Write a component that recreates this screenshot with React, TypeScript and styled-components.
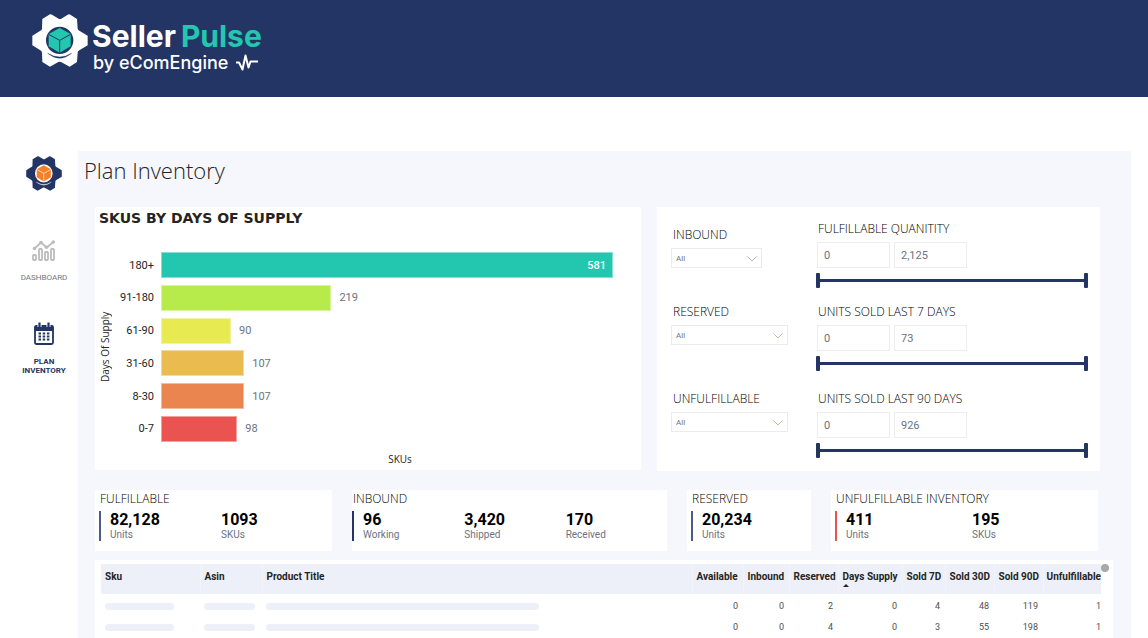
import React from "react";
import styled, { createGlobalStyle } from "styled-components";

const NAVY = "#233564";
const TEAL = "#23c6ae";
const DIN = `Roboto, "Liberation Sans", sans-serif`;
const HUMANIST = `"Open Sans", "Noto Sans", sans-serif`;
const LOGO = `Inter, "Liberation Sans", sans-serif`;

const GlobalStyle = createGlobalStyle`
  *, *::before, *::after { box-sizing: border-box; }
  body { margin: 0; background: #fff; color: #252423; font-family: ${DIN}; }
  h1, h2, h3, p, dl, dd, dt { margin: 0; font-weight: inherit; }
`;

/* ---------- page frame ---------- */

const Page = styled.div`
  display: flex;
  flex-direction: column;
  min-height: 100vh;
`;

const Header = styled.header`
  background: ${NAVY};
  height: 97px;
  padding: 14px 32px;
`;

const Brand = styled.a`
  display: inline-flex;
  gap: 4px;
  color: #fff;
  text-decoration: none;
  font-family: ${LOGO};
`;

const BrandText = styled.span`
  display: flex;
  flex-direction: column;
  padding-top: 8px;
`;

const BrandName = styled.span`
  display: flex;
  gap: 5px;
  font-size: 30px;
  line-height: 29px;
  font-weight: 700;
`;

const Accent = styled.span`
  color: ${TEAL};
`;

const Byline = styled.span`
  display: flex;
  align-items: center;
  gap: 7px;
  padding-left: 1px;
  font-size: 18px;
  line-height: 23px;
  font-weight: 500;
`;

const Body = styled.div`
  display: flex;
  flex: 1;
  padding: 54px 17px 0 0;
`;

const Sidebar = styled.nav`
  display: flex;
  flex-direction: column;
  align-items: center;
  width: 78px;
  padding: 5px 5px 0 15px;
  flex: none;
`;

const HomeLink = styled.a`
  display: block;
  height: 34px;
`;

const NavLink = styled.a<{ $active?: boolean }>`
  display: flex;
  flex-direction: column;
  align-items: center;
  gap: 12px;
  margin-top: ${(p) => (p.$active ? 40 : 50)}px;
  color: ${(p) => (p.$active ? NAVY : "#6f7783")};
  font-size: 8px;
  line-height: 9px;
  font-weight: ${(p) => (p.$active ? 700 : 400)};
  text-align: center;
  text-transform: uppercase;
  text-decoration: none;
`;

const Main = styled.main`
  display: flex;
  flex-direction: column;
  flex: 1;
  min-width: 0;
  background: #f6f7fc;
  padding: 0 18px 0 17px;
`;

const Title = styled.h1`
  height: 56px;
  margin-left: -11px;
  padding-top: 4px;
  font-family: ${HUMANIST};
  font-size: 22px;
  line-height: 30px;
  font-weight: 300;
`;

const Card = styled.section`
  background: #fff;
`;

const TopRow = styled.div`
  display: grid;
  grid-template-columns: 546fr 443fr;
  gap: 16px;
  padding-right: 13px;
`;

/* ---------- bar chart ---------- */

const ChartCard = styled(Card)`
  display: flex;
  flex-direction: column;
  height: 263px;
  padding: 3px 0 5px 4px;
`;

const ChartTitle = styled.h2`
  font-family: "DejaVu Sans", sans-serif;
  font-size: 14px;
  line-height: 16px;
  font-weight: 700;
`;

const Plot = styled.div`
  display: flex;
  flex: 1;
  padding: 26px 28px 11px 0;
`;

const AxisTitle = styled.span`
  font-family: ${HUMANIST};
  font-size: 10px;
  line-height: 12px;
  text-align: center;
`;

const YAxisTitle = styled(AxisTitle)`
  width: 12px;
  writing-mode: vertical-rl;
  transform: rotate(180deg);
`;

const XAxisTitle = styled(AxisTitle)`
  padding-left: 60px;
`;

const Bars = styled.div`
  display: flex;
  flex: 1;
  flex-direction: column;
  justify-content: space-between;
`;

const BarRow = styled.div`
  display: grid;
  grid-template-columns: 43px 1fr;
  column-gap: 7px;
  align-items: center;
  height: 26px;
  font-size: 11px;
  line-height: 14px;
`;

const Category = styled.span`
  padding-top: 1px;
  text-align: right;
`;

const BarTrack = styled.div`
  display: flex;
  align-items: center;
  gap: 8px;
  color: #6b7383;
`;

const Bar = styled.div<{ $color: string }>`
  display: flex;
  align-items: center;
  justify-content: flex-end;
  height: 26px;
  padding: 1px 6px 0 0;
  border: 1px solid rgba(255, 255, 255, 0.45);
  background: ${(p) => p.$color};
  color: #fff;
  font-weight: 500;
`;

const BarValue = styled.span`
  padding-top: 1px;
`;

/* ---------- filters ---------- */

const FilterCard = styled(Card)`
  display: grid;
  grid-template-columns: 146px 1fr;
  grid-template-rows: 83px 87px auto;
  height: 264px;
  padding: 14px 12px 0 14px;
`;

const Field = styled.div<{ $lowered?: boolean }>`
  display: flex;
  flex-direction: column;
  align-items: flex-start;
  padding-top: ${(p) => (p.$lowered ? 6 : 0)}px;
`;

const RangeGroup = styled.fieldset`
  min-width: 0;
  margin: 0;
  padding: 0;
  border: 0;
`;

const labelText = `
  font-family: ${HUMANIST};
  font-size: 12px;
  line-height: 16px;
  font-weight: 300;
  color: #000;
`;

const FieldLabel = styled.label`
  ${labelText}
  padding: 0 2px;
`;

const RangeLegend = styled.legend`
  ${labelText}
  padding: 0 1px;
`;

const SelectBox = styled.span<{ $wide?: boolean }>`
  display: grid;
  grid-template-columns: 1fr 14px;
  align-items: center;
  width: ${(p) => (p.$wide ? 117 : 91)}px;
  height: 20px;
  margin-top: 5px;
  border: 1px solid #ebebee;

  svg {
    grid-area: 1 / 2;
    margin-top: 2px;
    pointer-events: none;
  }
`;

const Select = styled.select`
  grid-area: 1 / 1 / 2 / 3;
  appearance: none;
  width: 100%;
  height: 18px;
  padding: 0 4px;
  border: 0;
  background: transparent;
  color: #6b7383;
  font-family: ${DIN};
  font-size: 8px;
`;

const Inputs = styled.div`
  display: flex;
  gap: 4px;
  margin-top: 5px;
`;

const NumberBox = styled.input`
  width: 73px;
  height: 26px;
  padding: 0 6px;
  border: 1px solid #ededf0;
  background: #fff;
  color: #6b7383;
  font-family: ${DIN};
  font-size: 11px;
`;

const Slider = styled.div`
  display: grid;
  align-items: center;
  height: 15px;
  margin: 5px 0 0 -1px;
  background: linear-gradient(${NAVY}, ${NAVY}) center / 100% 3px no-repeat;
`;

const Thumb = styled.input`
  grid-area: 1 / 1;
  appearance: none;
  width: 100%;
  height: 15px;
  margin: 0;
  background: transparent;
  pointer-events: none;

  &::-webkit-slider-thumb {
    appearance: none;
    width: 4px;
    height: 15px;
    border-radius: 1px;
    background: ${NAVY};
    pointer-events: auto;
  }
`;

/* ---------- key figures ---------- */

const KpiRow = styled.div`
  display: grid;
  grid-template-columns: 237fr 315fr 124fr 267fr;
  gap: 20px;
  margin: 19px 15px 0 0;
`;

const KpiCard = styled(Card)<{ $flush?: boolean }>`
  height: 61px;
  padding: 0 0 0 ${(p) => (p.$flush ? 0 : 4)}px;
`;

const KpiTitle = styled.h3`
  ${labelText}
  padding-left: 1px;
  line-height: 18px;
  white-space: nowrap;
`;

const KpiList = styled.dl<{ $color: string }>`
  display: grid;
  grid-auto-flow: column;
  grid-auto-columns: 1fr;
  height: 30px;
  margin-top: 3px;
  padding-left: 9px;
  border-left: 2px solid ${(p) => p.$color};
`;

const Kpi = styled.div`
  display: flex;
  flex-direction: column-reverse;
  justify-content: flex-end;
`;

const KpiValue = styled.dd`
  color: #000;
  font-size: 16px;
  line-height: 18px;
  font-weight: 700;
`;

const KpiLabel = styled.dt`
  color: #6b7383;
  font-size: 10px;
  line-height: 12px;
`;

/* ---------- table ---------- */

const TableCard = styled(Card)`
  display: flex;
  align-items: flex-start;
  flex: 1;
  margin-top: 9px;
  padding: 4px 4px 0 6px;
`;

const Table = styled.table`
  flex: 1;
  width: 100%;
  table-layout: fixed;
  border-collapse: collapse;
  font-size: 9px;
`;

const Th = styled.th<{ $width?: number; $num?: boolean }>`
  width: ${(p) => (p.$width ? `${p.$width}px` : "auto")};
  height: 30px;
  padding: 6px ${(p) => (p.$num ? 5 : 4)}px 0 4px;
  border-right: 1px solid #f2f4fa;
  background: #edf0f8;
  font-size: 10px;
  line-height: 14px;
  font-weight: 700;
  text-align: ${(p) => (p.$num ? "right" : "left")};
  vertical-align: top;
  white-space: nowrap;

  &:last-child {
    padding: 6px 0 0;
    border-right: 0;
  }
`;

const SortMark = styled.svg`
  display: block;
`;

const Td = styled.td<{ $num?: boolean }>`
  height: 21px;
  padding: 3px ${(p) => (p.$num ? 5 : 4)}px 0 4px;
  color: #4a4f57;
  line-height: 12px;
  text-align: ${(p) => (p.$num ? "right" : "left")};

  &:last-child {
    padding-right: 0;
  }
`;

const Redacted = styled.span<{ $width: number }>`
  display: block;
  width: ${(p) => p.$width}px;
  height: 7px;
  border-radius: 4px;
  background: #edf0f8;
`;

const ScrollDot = styled.span`
  width: 8px;
  height: 8px;
  flex: none;
  border-radius: 50%;
  background: #a9a9a9;
`;

/* ---------- drawings ---------- */

type GearProps = { width: number; height: number; gear: string; disc: string; cube: string };

function GearLogo({ width, height, gear, disc, cube }: GearProps) {
  return (
    <svg width={width} height={height} viewBox="36 40 168 159" preserveAspectRatio="none" aria-hidden="true">
      <path
        d="M67 55 90 41Q93 40 96 42L116 54Q120 56 124 54L143 42Q148 40 151 42L171 55 173 84Q174 88 178 90L203 105V134L178 149Q173 152 173 156L171 184 149 198 123 184Q119 182 115 184L90 198 67 184 66 156Q66 152 61 149L37 134V105L61 90Q66 88 66 84Z"
        fill={gear}
      />
      <circle cx="119" cy="119" r="41" fill={disc} />
      <path d="M119 82 152 100V137L119 156 86 137V100Z" fill={cube} />
      <path d="M86 101 119 119 152 101M119 119V156" fill="none" stroke={disc} strokeWidth="3" />
      <path d="M83 158Q119 180 155 158Q119 188 83 158Z" fill={disc} stroke={disc} strokeWidth="1" />
    </svg>
  );
}

function Pulse() {
  return (
    <svg width="24" height="18" viewBox="0 0 24 18" fill="none" stroke="#fff" strokeWidth="2" strokeLinejoin="round" aria-hidden="true">
      <path d="M1 8.500H4L7.500 15.500 10.500 1.500 13.500 13.500 15.500 7.500H23" />
    </svg>
  );
}

function DashboardIcon() {
  return (
    <svg width="24" height="21" viewBox="0 0 24 21" fill="none" stroke="#bdbdbd" strokeWidth="1.800" aria-hidden="true">
      <rect x="1" y="15" width="3" height="5" rx=".8" />
      <rect x="7" y="9" width="3" height="11" rx=".8" />
      <rect x="13" y="12" width="3" height="8" rx=".8" />
      <rect x="19" y="9" width="3" height="11" rx=".8" />
      <path d="M2.500 8.500 9 2.500 14.500 7.500 21.500 2" />
      <g fill="#bdbdbd" stroke="none">
        <circle cx="2.500" cy="8.500" r="1.800" />
        <circle cx="9" cy="2.500" r="1.800" />
        <circle cx="14.500" cy="7.200" r="1.800" />
        <circle cx="21.300" cy="2" r="1.800" />
      </g>
    </svg>
  );
}

function CalendarIcon() {
  return (
    <svg width="20" height="23" viewBox="0 0 20 23" aria-hidden="true">
      <rect x="1" y="4" width="18" height="18" rx="1.500" fill="#fff" stroke={NAVY} strokeWidth="1.800" />
      <path d="M.5 9V5Q.5 3.200 2 3.200H18Q19.500 3.200 19.500 5V9Z" fill={NAVY} />
      <path d="M5.500 1V5M14.500 1V5" stroke="#fff" strokeWidth="4" />
      <path d="M5.500.5V5M14.500.5V5" stroke={NAVY} strokeWidth="2.200" />
      <g fill={NAVY}>
        {[10.5, 13.5, 16.5].map((y) =>
          [4.5, 8.7, 12.9].map((x) => <rect key={`${x}-${y}`} x={x} y={y} width="2.500" height="2" />)
        )}
      </g>
    </svg>
  );
}

function Chevron({ color }: { color: string }) {
  return (
    <svg width="10" height="6" viewBox="0 0 10 6" fill="none" stroke={color} aria-hidden="true">
      <path d="M.5.5 5 5 9.500.5" />
    </svg>
  );
}

/* ---------- data ---------- */

const supply = [
  { range: "180+", skus: 581, color: "#23c6ae" },
  { range: "91-180", skus: 219, color: "#b7eb4c" },
  { range: "61-90", skus: 90, color: "#e7ea50" },
  { range: "31-60", skus: 107, color: "#eabb4e" },
  { range: "8-30", skus: 107, color: "#ea8550" },
  { range: "0-7", skus: 98, color: "#ea5450" },
];
const maxSkus = 581;

const filters = [
  { select: "Inbound", chevron: "#aeb4bf", range: "FULFILLABLE QUANITITY", high: "2,125" },
  { select: "Reserved", chevron: "#d9b59a", range: "UNITS SOLD LAST 7 DAYS", high: "73" },
  { select: "Unfulfillable", chevron: "#d9b59a", range: "UNITS SOLD LAST 90 DAYS", high: "926" },
];

const kpis = [
  { title: "FULFILLABLE", color: "#4c5b87", items: [["82,128", "Units"], ["1093", "SKUs"]] },
  { title: "INBOUND", color: NAVY, flush: true, items: [["96", "Working"], ["3,420", "Shipped"], ["170", "Received"]] },
  { title: "RESERVED", color: "#4c5b87", items: [["20,234", "Units"]] },
  { title: "UNFULFILLABLE INVENTORY", color: "#ea5450", items: [["411", "Units"], ["195", "SKUs"]] },
];

const columns = [
  { name: "Available", width: 51 },
  { name: "Inbound", width: 46 },
  { name: "Reserved", width: 49 },
  { name: "Days Supply", width: 64, sorted: true },
  { name: "Sold 7D", width: 43 },
  { name: "Sold 30D", width: 49 },
  { name: "Sold 90D", width: 49 },
  { name: "Unfulfillable", width: 58 },
];

const rows = [
  [0, 0, 2, 0, 4, 48, 119, 1],
  [0, 0, 4, 0, 3, 55, 198, 1],
];

/* ---------- sections ---------- */

function SupplyChart() {
  return (
    <ChartCard>
      <ChartTitle>SKUS BY DAYS OF SUPPLY</ChartTitle>
      <Plot>
        <YAxisTitle>Days Of Supply</YAxisTitle>
        <Bars>
          {supply.map((s) => {
            const full = s.skus === maxSkus;
            return (
              <BarRow key={s.range}>
                <Category>{s.range}</Category>
                <BarTrack>
                  <Bar $color={s.color} style={{ width: `${(s.skus / maxSkus) * 100}%` }}>
                    {full && s.skus}
                  </Bar>
                  {!full && <BarValue>{s.skus}</BarValue>}
                </BarTrack>
              </BarRow>
            );
          })}
        </Bars>
      </Plot>
      <XAxisTitle>SKUs</XAxisTitle>
    </ChartCard>
  );
}

function Filters() {
  return (
    <FilterCard>
      {filters.map((f, i) => (
        <React.Fragment key={f.select}>
          <Field $lowered={i === 0}>
            <FieldLabel htmlFor={f.select}>{f.select.toUpperCase()}</FieldLabel>
            <SelectBox $wide={i > 0}>
              <Select id={f.select}>
                <option>All</option>
              </Select>
              <Chevron color={f.chevron} />
            </SelectBox>
          </Field>
          <RangeGroup>
            <RangeLegend>{f.range}</RangeLegend>
            <Inputs>
              <NumberBox aria-label={`${f.range} from`} defaultValue="0" />
              <NumberBox aria-label={`${f.range} to`} defaultValue={f.high} />
            </Inputs>
            <Slider>
              <Thumb type="range" aria-label={`${f.range} lower bound`} defaultValue={0} />
              <Thumb type="range" aria-label={`${f.range} upper bound`} defaultValue={100} />
            </Slider>
          </RangeGroup>
        </React.Fragment>
      ))}
    </FilterCard>
  );
}

function InventoryTable() {
  return (
    <TableCard>
      <Table>
        <thead>
          <tr>
            <Th $width={99}>Sku</Th>
            <Th $width={62}>Asin</Th>
            <Th>Product Title</Th>
            {columns.map((c) => (
              <Th key={c.name} $width={c.width} $num aria-sort={c.sorted ? "ascending" : undefined}>
                {c.name}
                {c.sorted && (
                  <SortMark width="6" height="3" viewBox="0 0 6 3" aria-hidden="true">
                    <path d="M0 3 3 0 6 3Z" fill="#252423" />
                  </SortMark>
                )}
              </Th>
            ))}
          </tr>
        </thead>
        <tbody>
          {rows.map((row, i) => (
            <tr key={i}>
              <Td><Redacted $width={69} /></Td>
              <Td><Redacted $width={51} /></Td>
              <Td><Redacted $width={273} /></Td>
              {row.map((v, j) => (
                <Td key={j} $num>{v}</Td>
              ))}
            </tr>
          ))}
        </tbody>
      </Table>
      <ScrollDot />
    </TableCard>
  );
}

export default function App() {
  return (
    <Page>
      <GlobalStyle />
      <Header>
        <Brand href="#">
          <GearLogo width={56} height={53} gear="#fff" disc={NAVY} cube={TEAL} />
          <BrandText>
            <BrandName>
              <span>Seller</span>
              <Accent>Pulse</Accent>
            </BrandName>
            <Byline>
              by eComEngine
              <Pulse />
            </Byline>
          </BrandText>
        </Brand>
      </Header>
      <Body>
        <Sidebar>
          <HomeLink href="#" aria-label="Home">
            <GearLogo width={36} height={35} gear={NAVY} disc="#fff" cube="#f58025" />
          </HomeLink>
          <NavLink href="#">
            <DashboardIcon />
            Dashboard
          </NavLink>
          <NavLink href="#" $active>
            <CalendarIcon />
            <span>
              Plan
              <br />
              Inventory
            </span>
          </NavLink>
        </Sidebar>
        <Main>
          <Title>Plan Inventory</Title>
          <TopRow>
            <SupplyChart />
            <Filters />
          </TopRow>
          <KpiRow>
            {kpis.map((k) => (
              <KpiCard key={k.title} $flush={k.flush}>
                <KpiTitle>{k.title}</KpiTitle>
                <KpiList $color={k.color}>
                  {k.items.map(([value, label]) => (
                    <Kpi key={label}>
                      <KpiLabel>{label}</KpiLabel>
                      <KpiValue>{value}</KpiValue>
                    </Kpi>
                  ))}
                </KpiList>
              </KpiCard>
            ))}
          </KpiRow>
          <InventoryTable />
        </Main>
      </Body>
    </Page>
  );
}
